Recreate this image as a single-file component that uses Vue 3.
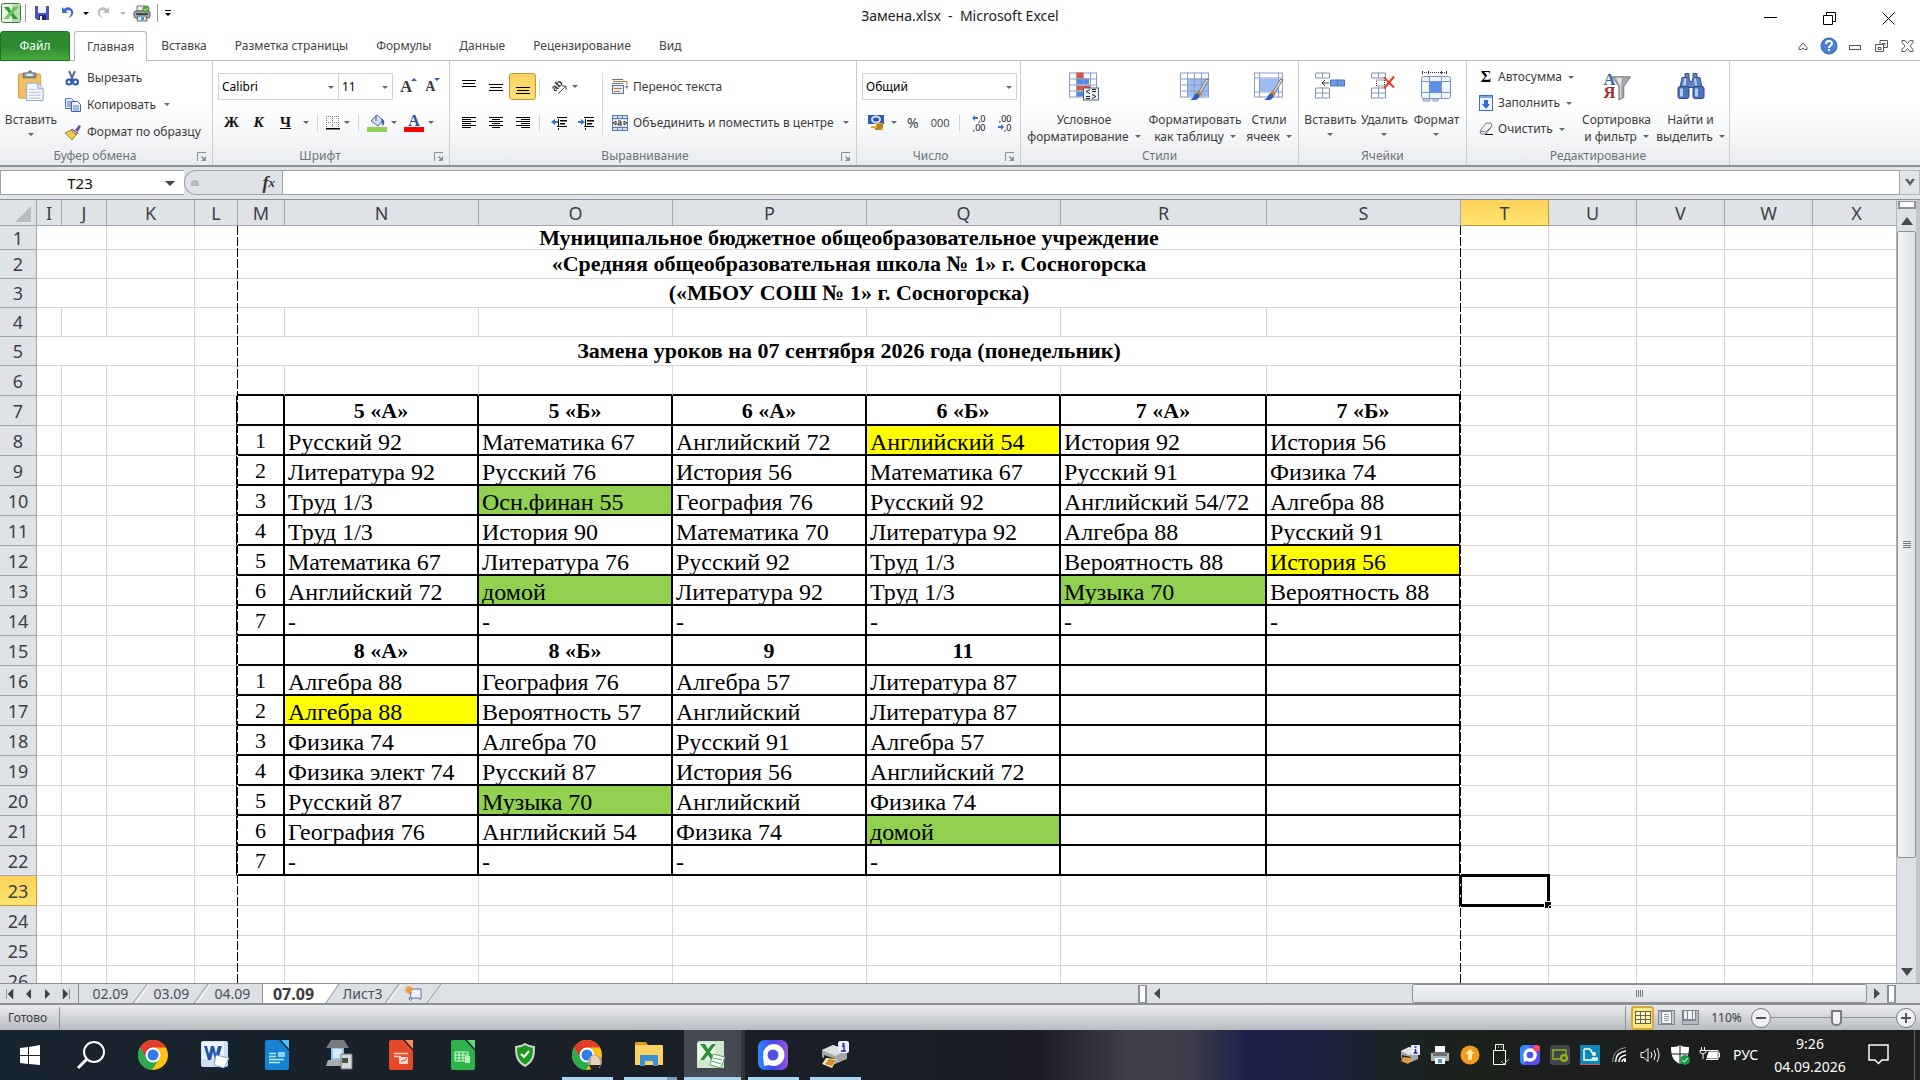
<script setup>
import { ref } from 'vue'

const tabs = ['Главная', 'Вставка', 'Разметка страницы', 'Формулы', 'Данные', 'Рецензирование', 'Вид']

const columns = [
  { name: 'I', w: 25 }, { name: 'J', w: 45 }, { name: 'K', w: 88 }, { name: 'L', w: 43 },
  { name: 'M', w: 47 }, { name: 'N', w: 194 }, { name: 'O', w: 194 }, { name: 'P', w: 194 },
  { name: 'Q', w: 194 }, { name: 'R', w: 206 }, { name: 'S', w: 194 }, { name: 'T', w: 88 },
  { name: 'U', w: 88 }, { name: 'V', w: 88 }, { name: 'W', w: 88 }, { name: 'X', w: 0 },
]

const titles = {
  1: 'Муниципальное бюджетное общеобразовательное учреждение',
  2: '«Средняя общеобразовательная школа № 1» г. Сосногорска',
  3: '(«МБОУ СОШ № 1» г. Сосногорска)',
  5: 'Замена уроков на 07 сентября 2026 года (понедельник)',
}

// A trailing "!" marks a yellow cell, a trailing "+" a green one.
const lessons = [
  ['', '5 «А»', '5 «Б»', '6 «А»', '6 «Б»', '7 «А»', '7 «Б»'],
  ['1', 'Русский 92', 'Математика 67', 'Английский 72', 'Английский 54!', 'История 92', 'История 56'],
  ['2', 'Литература 92', 'Русский 76', 'История 56', 'Математика 67', 'Русский 91', 'Физика 74'],
  ['3', 'Труд 1/3', 'Осн.финан 55+', 'География 76', 'Русский 92', 'Английский 54/72', 'Алгебра 88'],
  ['4', 'Труд 1/3', 'История 90', 'Математика 70', 'Литература 92', 'Алгебра 88', 'Русский 91'],
  ['5', 'Математика 67', 'Литература 76', 'Русский 92', 'Труд 1/3', 'Вероятность 88', 'История 56!'],
  ['6', 'Английский 72', 'домой+', 'Литература 92', 'Труд 1/3', 'Музыка 70+', 'Вероятность 88'],
  ['7', '-', '-', '-', '-', '-', '-'],
  ['', '8 «А»', '8 «Б»', '9', '11', '', ''],
  ['1', 'Алгебра 88', 'География 76', 'Алгебра 57', 'Литература 87', '', ''],
  ['2', 'Алгебра 88!', 'Вероятность 57', 'Английский', 'Литература 87', '', ''],
  ['3', 'Физика 74', 'Алгебра 70', 'Русский 91', 'Алгебра 57', '', ''],
  ['4', 'Физика элект 74', 'Русский 87', 'История 56', 'Английский 72', '', ''],
  ['5', 'Русский 87', 'Музыка 70+', 'Английский', 'Физика 74', '', ''],
  ['6', 'География 76', 'Английский 54', 'Физика 74', 'домой+', '', ''],
  ['7', '-', '-', '-', '-', '', ''],
]

const plain = (n, extra = '') => Array.from({ length: n }, () => ({ t: '', span: 1, c: extra }))

function buildRow(n) {
  let cells = []
  if (titles[n]) {
    cells = n === 5
      ? [{ t: '', span: 3, c: '' }, ...plain(1)]
      : [{ t: '', span: 2, c: '' }, ...plain(2)]
    cells.push({ t: titles[n], span: 7, c: n === 1 ? 'title first' : 'title' })
  } else if (n >= 7 && n <= 22) {
    cells = [...plain(3), ...plain(1, 'edge')]
    lessons[n - 7].forEach((raw, i) => {
      const mark = raw.endsWith('!') ? ' yellow' : raw.endsWith('+') ? ' green' : ''
      const kind = i === 0 ? 'num' : n === 7 || n === 15 ? 'head' : 'lesson'
      cells.push({ t: raw.replace(/[!+]$/, ''), span: 1, c: `box ${kind}${mark}` })
    })
  } else {
    cells = [...plain(4), ...plain(7, n === 6 ? 'top' : '')]
  }
  const tail = plain(5)
  if (n === 23) tail[0].c = 'active'
  return { n, h: n === 1 ? 24 : n < 6 ? 29 : 30, cells: [...cells, ...tail] }
}
const rows = Array.from({ length: 26 }, (_, i) => buildRow(i + 1))

const fontName = ref('Calibri')
const fontSize = ref('11')
const numFormat = ref('Общий')
const cellName = ref('T23')
const formula = ref('')
const zoom = ref(110)
</script>

<template>
  <div class="screen">
    <header class="titlebar">
      <div class="quick">
        <svg width="20" height="20" viewBox="0 0 20 20"><rect x=".5" y=".5" width="19" height="19" rx="2" fill="#e4f2df" stroke="#2f7d3b" /><path d="M11 1h8v18h-8z" fill="#b9dcae" /><path d="M3 4h5l2 4 3-4h4l-5 6 5 6h-5l-2-4-3 4H3l5-6z" fill="#2f9a3c" /><path d="M3 16 15 3h2L7 16z" fill="#7ccb5c" /></svg>
        <i class="qsep"></i>
        <button aria-label="Сохранить"><svg width="14" height="14" viewBox="0 0 14 14"><path d="M0 0h14v14H2L0 12z" fill="#4b55b5" /><path d="M3 0h8v7H3z" fill="#eef2ff" /><path d="M4 9h7v5H4z" fill="#20296e" /><path d="M5 10h2v4H5z" fill="#fff" /></svg></button>
        <button aria-label="Отменить" class="undo"><svg width="14" height="14" viewBox="0 0 14 14"><path d="M2 1v6h6L6 5c3-2 6 0 5 3-.5 2-2 3-3 4 4-1 6-4 5-7C12 1 7 0 4 3z" fill="#3d71c9" /></svg></button>
        <i class="tri dark"></i>
        <button aria-label="Вернуть" class="redo"><svg width="14" height="14" viewBox="0 0 14 14"><path d="M12 1v6H6l2-2C5 3 2 5 3 8c.5 2 2 3 3 4C2 11 0 8 1 5 2 1 7 0 10 3z" fill="#b9bcc1" /></svg></button>
        <i class="tri pale"></i>
        <button aria-label="Быстрая печать" class="print"><svg width="18" height="17" viewBox="0 0 18 17"><path d="M4 1h8v5H4z" fill="#eee" stroke="#777" /><rect x="1" y="6" width="16" height="7" rx="2" fill="#a9adb2" stroke="#555" /><path d="M3 8h12v2H3z" fill="#444" /><path d="M5 11h8l1 5H4z" fill="#d6eaf4" stroke="#666" /><path d="M8 12h3v3H8z" fill="#3d9bd0" /><circle cx="13" cy="4" r="3.500" fill="#49a62c" /><path d="m11 4 1.500 1.500L15 3" fill="none" stroke="#fff" /></svg></button>
        <i class="qsep"></i>
        <button aria-label="Настройка панели" class="more"><svg width="8" height="7" viewBox="0 0 8 7"><path d="M1 0h6v1H1zM1 3h6L4 6z" /></svg></button>
      </div>
      <h1>Замена.xlsx&nbsp; -&nbsp; Microsoft Excel</h1>
      <div class="winbtns">
        <button aria-label="Свернуть"><svg width="13" height="13"><path d="M0 5.500h13" stroke="#000" /></svg></button>
        <button aria-label="Восстановить"><svg width="13" height="13" fill="none" stroke="#000"><path d="M.5 3.500h9v9h-9zM3.500 3V.5h9v9H10" /></svg></button>
        <button aria-label="Закрыть"><svg width="13" height="13" stroke="#000"><path d="m.5.5 12 12m0-12-12 12" /></svg></button>
      </div>
    </header>

    <nav class="tabs">
      <button class="file">Файл</button>
      <button v-for="(t, i) in tabs" :key="t" class="tab" :class="{ on: i === 0 }">{{ t }}</button>
      <div class="mdi">
        <button aria-label="Свернуть ленту"><svg width="10" height="10" fill="none" stroke="#555"><path d="M1 6.500 5 2l4 4.500v2H6.500L5 7 3.500 8.500H1z" /></svg></button>
        <button aria-label="Справка"><svg width="18" height="18" viewBox="0 0 18 18"><circle cx="9" cy="9" r="8" fill="#4a7fd3" stroke="#3564ad" /><path d="M6 7c0-4 6-4 6-.5 0 2-3 2-3 4.500" fill="none" stroke="#fff" stroke-width="2" /><path d="M8 12h2v2H8z" fill="#fff" /></svg></button>
        <button aria-label="Свернуть книгу"><svg width="12" height="12" fill="none" stroke="#555"><rect x=".5" y="5.500" width="11" height="4" /></svg></button>
        <button aria-label="Восстановить книгу"><svg width="13" height="12" fill="none" stroke="#555"><path d="M5 4V.5h7.500v7H9M.5 4.500h8v7h-8zM3 7.500h3v2H3zM7 3.500h3v2" /></svg></button>
        <button aria-label="Закрыть книгу"><svg width="13" height="12" fill="none" stroke="#555"><path d="M1 .5h3l2.500 3 2.500-3h3v2L9 6l3 3.500v2H9l-2.500-3-2.500 3H1v-2L4 6 1 2.500z" /></svg></button>
      </div>
    </nav>

    <section class="ribbon">
      <div class="group g-clip">
        <div class="body">
          <button class="big">
            <svg width="28" height="32" viewBox="0 0 28 32"><rect x="1" y="3" width="23" height="25" rx="2" fill="#f0bf66" stroke="#d79c3e" /><path d="M6 2h5c0-3 4-3 4 0h4v5H6z" fill="#8d949c" stroke="#6b7077" /><path d="M9 3h7v2H9z" fill="#f3f3f3" /><path d="M9.500 12.500H21l5.500 6v12h-17z" fill="#f6faff" stroke="#8ba3c6" /><path d="M21 12.500v6h5.500" fill="#d7e4f5" stroke="#8ba3c6" /><path d="M12 19h7m-7 3h12m-12 3h12m-12 3h12" stroke="#a9bcd6" /></svg>
            <span>Вставить</span><i class="tri"></i>
          </button>
          <div class="list">
            <button><svg width="16" height="16" viewBox="0 0 16 16"><path d="m4 1 4 9M10 1 6 10" stroke="#566c91" stroke-width="2" /><circle cx="4" cy="12" r="2.500" fill="none" stroke="#2455b8" stroke-width="2" /><circle cx="10.500" cy="12" r="2.500" fill="none" stroke="#2455b8" stroke-width="2" /></svg>Вырезать</button>
            <button><svg width="16" height="16" viewBox="0 0 16 16"><path d="M.5 1.500h6l2 2v8h-8z" fill="#dce8fb" stroke="#5276b8" /><path d="M2 5h4M2 7h4M2 9h4" stroke="#5276b8" /><path d="M6.500 4.500h6l3 3v7h-9z" fill="#e9f1ff" stroke="#3d64ae" /><path d="M8 9h6m-6 2h6m-6 2h6" stroke="#5b82c8" /></svg>Копировать<i class="tri"></i></button>
            <button><svg width="16" height="16" viewBox="0 0 16 16"><path d="m10 6 4-5 2 1-3 6z" fill="#5b5b8e" /><path d="M7 5 13 9l-2 2-6-4z" fill="#a7adb8" stroke="#666" /><path d="m0 9 6-3 5 5-4 5z" fill="#efc94c" stroke="#a6812a" /></svg>Формат по образцу</button>
          </div>
        </div>
        <footer>Буфер обмена<svg class="launch" width="10" height="10"><path d="M.5 9V.5H9" fill="none" stroke="#8a8f96" /><path d="M9 4v5H4l2-2-2-2 1-1 2 2z" fill="#8a8f96" /></svg></footer>
      </div>

      <div class="group g-font">
        <div class="body stack">
          <div class="line">
            <label class="pick name"><select v-model="fontName" aria-label="Шрифт"><option>Calibri</option></select></label>
            <label class="pick size"><select v-model="fontSize" aria-label="Размер шрифта"><option>11</option></select></label>
            <button class="grow" aria-label="Увеличить размер">A<i></i></button>
            <button class="grow less" aria-label="Уменьшить размер">A<i></i></button>
          </div>
          <div class="line marks">
            <button class="bold">Ж</button><button class="bold ital">К</button><button class="bold under">Ч</button><i class="tri"></i>
            <i class="vsep"></i>
            <button aria-label="Границы"><svg width="14" height="14"><path d="M.5 0v13M6.500 0v13M12.500 0v13M0 .5h13M0 6.500h13" stroke="#777" stroke-dasharray="1 1" /><path d="M0 12h14v1.500H0z" /></svg></button><i class="tri"></i>
            <i class="vsep"></i>
            <button aria-label="Цвет заливки"><svg width="20" height="18" viewBox="0 0 20 18"><path d="m4 7 6-6 6 5-5 6z" fill="#cfe0f5" stroke="#566c91" /><path d="M9 1v6" stroke="#555" /><path d="M14 5c4 0 4 4 2 7-2-3-1-4-2-7z" fill="#3b66b5" /><path d="M0 13h20v5H0z" fill="#92d050" /></svg></button><i class="tri"></i>
            <button class="ink" aria-label="Цвет текста"><b>A</b><u></u></button><i class="tri"></i>
          </div>
        </div>
        <footer>Шрифт<svg class="launch" width="10" height="10"><path d="M.5 9V.5H9" fill="none" stroke="#8a8f96" /><path d="M9 4v5H4l2-2-2-2 1-1 2 2z" fill="#8a8f96" /></svg></footer>
      </div>

      <div class="group g-align">
        <div class="body">
          <div class="stack aligns">
            <div class="line">
              <button aria-label="По верхнему краю"><svg width="14" height="14"><path d="M0 .5h14M1 3.500h12M0 6.500h14" stroke="#000" /></svg></button>
              <button aria-label="По середине"><svg width="14" height="14"><path d="M0 4.500h14M1 7.500h12M0 10.500h14" stroke="#000" /></svg></button>
              <button class="pressed" aria-label="По нижнему краю"><svg width="14" height="14"><path d="M0 7.500h14M1 10.500h12M0 13.500h14" stroke="#000" /></svg></button>
              <i class="vsep"></i>
              <button aria-label="Ориентация"><svg width="18" height="16" viewBox="0 0 18 16"><text x="0" y="0" font-size="10" font-family="Liberation Sans" font-weight="bold" transform="translate(5 13) rotate(-45)" fill="#333">ab</text><path d="m8 15 8-8m0 0v4m0-4h-4" fill="none" stroke="#555" /></svg></button><i class="tri"></i>
            </div>
            <div class="line">
              <button aria-label="По левому краю"><svg width="14" height="12"><path d="M0 .5h14M0 2.500h9M0 4.500h14M0 6.500h9M0 8.500h14M0 10.500h9" stroke="#000" /></svg></button>
              <button aria-label="По центру"><svg width="14" height="12"><path d="M0 .5h14M3 2.500h8M0 4.500h14M3 6.500h8M0 8.500h14M3 10.500h8" stroke="#000" /></svg></button>
              <button aria-label="По правому краю"><svg width="14" height="12"><path d="M0 .5h14M5 2.500h9M0 4.500h14M5 6.500h9M0 8.500h14M5 10.500h9" stroke="#000" /></svg></button>
              <i class="vsep"></i>
              <button aria-label="Уменьшить отступ"><svg width="16" height="14"><path d="M6 1.500h10M9 4.500h7M9 7.500h5M6 10.500h10M7.500 12v2M7.500 3v7" stroke="#000" /><path d="M9 5h7M9 8h5" stroke="#000" /><path d="M0 6 4 3v2h3v2H4v2z" fill="#3d6fc9" /></svg></button>
              <button aria-label="Увеличить отступ"><svg width="16" height="14"><path d="M6 1.500h10M9 4.500h7M9 7.500h5M6 10.500h10M7.500 12v2M7.500 3v7" stroke="#000" /><path d="M9 5h7M9 8h5" stroke="#000" /><path d="M7 6 3 3v2H0v2h3v2z" fill="#3d6fc9" /></svg></button>
            </div>
          </div>
          <i class="tall"></i>
          <div class="stack wraps">
            <div class="line"><button><svg width="16" height="16" viewBox="0 0 16 16"><path d="M0 .5h11M0 4.500h11" stroke="#60738f" /><path d="M1 2.500h14v4" fill="none" stroke="#b7763a" /><path d="m13 7 2 3 1-3z" fill="#3d6fc9" /><rect x=".5" y="6.500" width="11" height="8" fill="#e4edf9" stroke="#60738f" /><path d="M2 9.500h8M2 12.500h6" stroke="#b7763a" /></svg>Перенос текста</button></div>
            <div class="line"><button><svg width="16" height="16" viewBox="0 0 16 16"><rect x=".5" y=".5" width="15" height="15" fill="#cfdff4" stroke="#5c7cab" /><path d="M0 3.500h16M0 12.500h16M5.500 0v3m5-3v3m-5 10v3m5-3v3" stroke="#5c7cab" /><path d="M1 5h14v6H1z" fill="#fff" /><path d="m1 8 3-2v4zM15 8l-3-2v4zM6 6h3v4H6V8h3m0 2h1" fill="none" stroke="#222" /></svg>Объединить и поместить в центре<i class="tri"></i></button></div>
          </div>
        </div>
        <footer class="wide-foot">Выравнивание<svg class="launch" width="10" height="10"><path d="M.5 9V.5H9" fill="none" stroke="#8a8f96" /><path d="M9 4v5H4l2-2-2-2 1-1 2 2z" fill="#8a8f96" /></svg></footer>
      </div>

      <div class="group g-num">
        <div class="body stack">
          <div class="line"><label class="pick fmt"><select v-model="numFormat" aria-label="Числовой формат"><option>Общий</option></select></label></div>
          <div class="line nums">
            <button aria-label="Финансовый формат"><svg width="16" height="16" viewBox="0 0 16 16"><rect y="0" width="16" height="9" fill="#2e5bb1" /><ellipse cx="8" cy="4.500" rx="4" ry="3" fill="none" stroke="#cfe0ff" stroke-width="2" /><path d="M8 8h7v7H7v-2H3v-2h5z" fill="#e5a92c" /><path d="M9 10h6m-6 2h6m-8 2h6" stroke="#8a5c10" /></svg></button><i class="tri"></i>
            <button class="pct">%</button><button class="zeros">000</button><i class="vsep"></i>
            <button class="dec" aria-label="Увеличить разрядность"><span><svg width="6" height="6"><path d="M0 3 3 0v2h3v2H3v2z" fill="#3d6fc9" /></svg>,0</span><span>,00</span></button>
            <button class="dec" aria-label="Уменьшить разрядность"><span>,00</span><span><svg width="6" height="6"><path d="M6 3 3 0v2H0v2h3v2z" fill="#3d6fc9" /></svg>,0</span></button>
          </div>
        </div>
        <footer class="wide-foot">Число<svg class="launch" width="10" height="10"><path d="M.5 9V.5H9" fill="none" stroke="#8a8f96" /><path d="M9 4v5H4l2-2-2-2 1-1 2 2z" fill="#8a8f96" /></svg></footer>
      </div>

      <div class="group g-style">
        <div class="body">
          <button class="big wide">
            <svg width="30" height="30" viewBox="0 0 30 30"><rect x=".5" y="1.500" width="27" height="24" fill="#fff" stroke="#8a9dc4" /><path d="M7 1h7v6H7zM7 14h14v5H7z" fill="#e0513a" /><path d="M7 7h13v6H7zM7 20h7v5H7z" fill="#5585e0" /><path d="M.5 7.500h27m-27 6h27m-27 6h27M7.500 1v25M14.500 1v25M21.500 1v25" stroke="#8a9dc4" /><rect x="14.500" y="16.500" width="15" height="12" fill="#eef5fb" stroke="#4c5e7e" /><path d="m21 18-4 2 4 2m-4 3h4m-4 2h4m2-7h4m-4-2h4m-4 5 4 2-4 2" fill="none" stroke="#222" /></svg>
            <span>Условное</span><span>форматирование<i class="tri"></i></span>
          </button>
          <button class="big fmtas">
            <svg width="30" height="30" viewBox="0 0 30 30"><rect x=".5" y="1.500" width="28" height="24" fill="#fff" stroke="#8a9dc4" /><path d="M7 7h21v18H7z" fill="#9dbcf2" /><path d="M.5 7.500h28m-28 6h28m-28 6h28M7.500 1v25M14.500 1v25M21.500 1v25" stroke="#8a9dc4" /><path d="m29 8-8 13-2-1 7-12z" fill="#ddd" stroke="#777" /><path d="m18 19 4 3-3 4-4-2z" fill="#c98035" /><path d="M16 22c3 0 4 2 3 4-2 3-6 3-9 2 4-1 3-4 6-6z" fill="#2e62b8" /></svg>
            <span>Форматировать</span><span>как таблицу<i class="tri"></i></span>
          </button>
          <button class="big cellst">
            <svg width="30" height="30" viewBox="0 0 30 30"><rect x=".5" y="1.500" width="28" height="24" fill="#fff" stroke="#8a9dc4" /><path d="M5.500 1v25M24.500 1v25M0 6.500h29M0 20.500h29" stroke="#8a9dc4" /><path d="M6 7h18v13H6z" fill="#9dbcf2" /><path d="m29 8-8 13-2-1 7-12z" fill="#ddd" stroke="#777" /><path d="m18 19 4 3-3 4-4-2z" fill="#c98035" /><path d="M16 22c3 0 4 2 3 4-2 3-6 3-9 2 4-1 3-4 6-6z" fill="#2e62b8" /></svg>
            <span>Стили</span><span>ячеек<i class="tri"></i></span>
          </button>
        </div>
        <footer>Стили</footer>
      </div>

      <div class="group g-cells">
        <div class="body">
          <button class="big c1">
            <svg width="30" height="30" viewBox="0 0 30 30"><path d="M.5 1.500h14v5H.5zM7.500 1v5M.5 16.500h14v10H.5zM7.500 16v10M.5 21.500h14" fill="#fff" stroke="#8093b8" /><path d="M15.500 8.500h14v6h-14zM22.500 8v6" fill="#6d9ae6" stroke="#4c70b8" /><path d="M14 11.500H7m3-3-3 3 3 3" fill="none" stroke="#333" /></svg>
            <span>Вставить</span><i class="tri"></i>
          </button>
          <button class="big c2">
            <svg width="26" height="30" viewBox="0 0 26 30"><path d="M.5 1.500h14v5H.5zM7.500 1v5M.5 16.500h14v10H.5zM7.500 16v10M.5 21.500h14" fill="#fff" stroke="#8093b8" /><path d="M5.500 8.500h8v6h-8z" fill="none" stroke="#333" stroke-dasharray="1 1" /><path d="m13 6 10 10m0-11L13 17" stroke="#e23a22" stroke-width="2" /></svg>
            <span>Удалить</span><i class="tri"></i>
          </button>
          <button class="big c3">
            <svg width="30" height="31" viewBox="0 0 30 31"><path d="M1 1.500h26" stroke="#333" stroke-dasharray="1 1" /><path d="M1.500 0v3M7.500 0v3m13-3v3m5-3v3" stroke="#333" /><rect x=".5" y="5.500" width="29" height="22" rx="2" fill="#eef4fd" stroke="#8093b8" /><path d="M8.500 5v22M20.500 5v22M0 10.500h29M0 21.500h29" stroke="#8093b8" /><path d="M9 11h11v11H9z" fill="#5f8fe4" /><path d="M2 28h7v2H2zm10 0h5v2h-5z" fill="#fff" stroke="#8093b8" /></svg>
            <span>Формат</span><i class="tri"></i>
          </button>
        </div>
        <footer>Ячейки</footer>
      </div>

      <div class="group g-edit">
        <div class="body">
          <div class="list edit">
            <button><b class="sigma">Σ</b>Автосумма<i class="tri"></i></button>
            <button><svg width="14" height="16" viewBox="0 0 14 16"><rect x=".5" y=".5" width="13" height="15" fill="#eef5ff" stroke="#3b6bbd" /><path d="M1 1h12v2H1z" fill="#7fa6e4" /><path d="M5 5h4v4h2l-4 5-4-5h2z" fill="#2f6be0" /></svg>Заполнить<i class="tri"></i></button>
            <button><svg width="14" height="14" viewBox="0 0 14 14"><path d="m1 9 6-8h5l1 3-6 8H2z" fill="#f2f3f7" stroke="#777a8c" /><path d="m1 9 6 1 6-6" fill="none" stroke="#777a8c" /><path d="M6 12.500h8" stroke="#000" /></svg>Очистить<i class="tri"></i></button>
          </div>
          <button class="big sort">
            <svg width="30" height="32" viewBox="0 0 30 32"><text x="1" y="14" font-family="Liberation Serif" font-weight="bold" font-size="17" fill="#3561ad">A</text><text x="1" y="28" font-family="Liberation Serif" font-weight="bold" font-size="17" fill="#a12f2f">Я</text><path d="M10 6h19l-7 10v11l-5 3V16z" fill="#a5a8ad" stroke="#75787c" /><path d="M14 7h6l-1 8v13l-1 0V15z" fill="#e4e6e8" /></svg>
            <span>Сортировка</span><span>и фильтр<i class="tri"></i></span>
          </button>
          <button class="big find">
            <svg width="28" height="30" viewBox="0 0 28 30"><path d="M8 2h4v4H8zM16 2h4v4h-4zM5 6h7l1 4h2l1-4h7l2 10H3z" fill="#5f82c0" stroke="#35538c" /><rect x="1" y="15" width="11" height="12" rx="2" fill="#4a73bd" stroke="#2e4a82" /><rect x="16" y="15" width="11" height="12" rx="2" fill="#4a73bd" stroke="#2e4a82" /><path d="M3 17h3v8H3zm15 0h3v8h-3zM7 7h2v7H6zm10 0h2l1 7h-2z" fill="#b9cdf0" /></svg>
            <span>Найти и</span><span>выделить<i class="tri"></i></span>
          </button>
        </div>
        <footer>Редактирование</footer>
      </div>
    </section>

    <section class="fbar">
      <label class="cellname"><input v-model="cellName" aria-label="Имя ячейки" /></label>
      <div class="fx"><i></i><button><em>f</em><sub>x</sub></button></div>
      <input v-model="formula" class="formula" aria-label="Строка формул" />
      <button class="expand" aria-label="Развернуть"><svg width="12" height="9"><path d="M1 1h3l2 3 2-3h3L6 8z" fill="#555a60" /></svg></button>
    </section>

    <main class="sheet">
      <div class="gridwrap">
        <table class="grid">
          <colgroup><col class="rowcol" /><col v-for="c in columns" :key="c.name" :style="c.w ? { width: c.w + 'px' } : null" /></colgroup>
          <thead><tr><th class="corner"><i></i></th><th v-for="c in columns" :key="c.name" :class="{ hot: c.name === 'T' }">{{ c.name }}</th></tr></thead>
          <tbody>
            <tr v-for="r in rows" :key="r.n" :style="{ height: r.h + 'px' }">
              <th :class="{ hot: r.n === 23 }"><div>{{ r.n }}</div></th>
              <td v-for="(c, i) in r.cells" :key="i" :colspan="c.span" :class="c.c"><div v-if="c.t">{{ c.t }}</div><i v-if="c.c === 'active'" class="cursor"></i></td>
            </tr>
          </tbody>
        </table>
        <i class="pagebreak left"></i><i class="pagebreak right"></i>
      </div>
      <div class="vscroll">
        <i class="split"></i>
        <svg class="arr" width="12" height="8"><path d="M0 8h12L6 0z" fill="#444a50" /></svg>
        <div class="vtrack"><div class="vthumb"><i></i><i></i><i></i><i></i></div></div>
        <svg class="arr" width="12" height="8"><path d="M0 0h12L6 8z" fill="#444a50" /></svg>
      </div>
    </main>

    <div class="sheetbar">
      <div class="snav">
        <button aria-label="Первый лист"><svg width="9" height="10"><path d="M1.500 0v10M8 0v10L3 5z" fill="#3b4046" stroke="#3b4046" stroke-width=".5" /></svg></button>
        <button aria-label="Предыдущий лист"><svg width="9" height="10"><path d="M7 0v10L2 5z" fill="#3b4046" /></svg></button>
        <button aria-label="Следующий лист"><svg width="9" height="10"><path d="M2 0v10l5-5z" fill="#3b4046" /></svg></button>
        <button aria-label="Последний лист"><svg width="9" height="10"><path d="M7.500 0v10M1 0v10l5-5z" fill="#3b4046" stroke="#3b4046" stroke-width=".5" /></svg></button>
      </div>
      <div class="stabs">
        <button>02.09</button><svg width="16" height="20"><path d="M0 19 14 0" stroke="#8f959c" /><path d="M3 19 16 1" stroke="#fff" /></svg>
        <button>03.09</button><svg width="16" height="20"><path d="M0 19 14 0" stroke="#8f959c" /><path d="M3 19 16 1" stroke="#fff" /></svg>
        <button>04.09</button>
        <button class="cur">07.09</button><svg width="16" height="20"><path d="M0 0h14L1 20H0z" fill="#fff" /><path d="M1 20 15 0" stroke="#8f959c" /></svg>
        <button>Лист3</button><svg width="16" height="20"><path d="M0 19 14 0" stroke="#8f959c" /><path d="M3 19 16 1" stroke="#fff" /></svg>
        <button aria-label="Вставить лист" class="newsheet"><svg width="18" height="16" viewBox="0 0 18 16"><path d="M5 3h11v9c0 2-2 2-2 0H7c0 3-3 3-3 0h2z" fill="#eef3fb" stroke="#5874a6" /><path d="M4 0v8M0 4h8M1 1l6 6m0-6L1 7" stroke="#e99a2c" stroke-width="1.500" /></svg></button><svg width="16" height="20"><path d="M0 19 14 0" stroke="#8f959c" /></svg>
      </div>
      <div class="hscroll">
        <i class="hsplit"></i>
        <svg width="6" height="11"><path d="M6 0v11L0 5.500z" fill="#444a50" /></svg>
        <div class="htrack"><div class="hthumb"><i></i><i></i><i></i><i></i></div></div>
        <svg width="6" height="11"><path d="M0 0v11l6-5.500z" fill="#444a50" /></svg>
        <i class="hsplit"></i>
      </div>
    </div>

    <div class="status">
      <span class="ready">Готово</span>
      <div class="views">
        <button class="sel" aria-label="Обычный"><svg width="16" height="13"><rect width="16" height="13" fill="#6a6146" /><path d="M1 1h4v3H1zm5 0h4v3H6zm5 0h4v3h-4zM1 5h4v3H1zm5 0h4v3H6zm5 0h4v3h-4zM1 9h4v3H1zm5 0h4v3H6zm5 0h4v3h-4z" fill="#fff6c8" /></svg></button>
        <button aria-label="Разметка страницы"><svg width="17" height="15"><rect width="17" height="15" fill="#7f858c" /><path d="M1 1h2v13H1zm13 0h2v13h-2z" fill="#c4c9ce" /><path d="M4 2h9v11H4z" fill="#f4f6f8" /><path d="M6 4.500h5m-5 2h5m-5 2h5m-5 2h5" stroke="#9aa0a6" /></svg></button>
        <button aria-label="Страничный"><svg width="17" height="15"><rect width="17" height="15" fill="#7f858c" /><path d="M2 1h3v8H2zm4 0h4v8H6zm5 0h2v8h-2z" fill="#eef0f3" /><path d="M14 1h2v13H1v-3h13z" fill="#b4b9bf" /></svg></button>
      </div>
      <span class="pc">110%</span>
      <div class="zoomer">
        <button aria-label="Уменьшить"><svg width="20" height="20"><path d="M5 10h10" stroke="#555" stroke-width="2" /></svg></button>
        <input v-model="zoom" type="range" min="10" max="200" aria-label="Масштаб" />
        <button aria-label="Увеличить"><svg width="20" height="20"><path d="M5 10h10M10 5v10" stroke="#555" stroke-width="2" /></svg></button>
      </div>
    </div>

    <div class="taskbar">
      <div class="apps">
        <button aria-label="Пуск"><svg width="20" height="20"><path d="m0 3 8-1v8H0zm9-1 11-2v10H9zM0 11h8v8l-8-1zm9 0h11v9L9 19z" fill="#fff" /></svg></button>
        <button aria-label="Поиск"><svg width="30" height="30" fill="none" stroke="#fff"><circle cx="18" cy="12" r="10" stroke-width="2" /><path d="M11 19 2 28" stroke-width="3" /></svg></button>
        <button aria-label="Chrome"><svg width="30" height="30" viewBox="0 0 30 30"><circle cx="15" cy="15" r="15" fill="#fbc116" /><path d="M2 7.500A15 15 0 0 1 28 7.500H15L8.500 19z" fill="#e33b2e" /><path d="M2 7.500A15 15 0 0 0 14 30l7.500-12-12 1z" fill="#2da94f" /><circle cx="15" cy="15" r="7.500" fill="#fff" /><circle cx="15" cy="15" r="5.500" fill="#2f7de9" /></svg></button>
        <button aria-label="Word"><svg width="28" height="28" viewBox="0 0 28 28"><rect width="27" height="26" rx="2" fill="#cfe0f6" /><path d="M1 1h22v17H1z" fill="#e9f2fd" /><path d="m3 5 4 14h3l2-8 2 8h3l4-14h-4l-2 8-2-8h-3L8 13 6 5z" fill="#2456a8" /><path d="m15 14 13 3-5 10-10-3z" fill="#fff" stroke="#7ba3d6" /></svg></button>
        <button aria-label="Writer"><svg width="24" height="30" viewBox="0 0 24 30"><path d="M2 0h12l10 11v17q0 2-2 2H2q-2 0-2-2V2q0-2 2-2z" fill="#1583d3" /><path d="M16 0h8v9z" fill="#4cc3f4" /><path d="M4 13.500h7M4 16.500h7M4 19.500h15M4 22.500h11" stroke="#bfe6ff" stroke-width="1.500" /><path d="M13 12h7v5h-7z" fill="#8fd2f7" /></svg></button>
        <button aria-label="Сканер"><svg width="30" height="30" viewBox="0 0 30 30"><path d="M7 0h13l5 8H2z" fill="#77797d" /><path d="M7 8h13v12H7z" fill="#8fc4ea" /><path d="M9 9h9v9H9z" fill="#d7edfb" /><path d="M4 20h20l2 6H2z" fill="#a9acb0" /><path d="M17 14h11v15H17z" fill="#d5d7da" stroke="#777" /><path d="M18 18h6v5h-6z" fill="#48553a" /></svg></button>
        <button aria-label="Impress"><svg width="24" height="30" viewBox="0 0 24 30"><path d="M2 0h12l10 11v17q0 2-2 2H2q-2 0-2-2V2q0-2 2-2z" fill="#e5492a" /><path d="M16 0h8v9z" fill="#f58a5d" /><path d="M5 13.500h14M5 16.500h7" stroke="#ffd9c9" stroke-width="1.500" /><path d="M10 17h9v7h-9z" fill="#ffd9c9" /><path d="m12 22 2-2 1 1 3-3" stroke="#e5492a" fill="none" /></svg></button>
        <button aria-label="Calc"><svg width="24" height="30" viewBox="0 0 24 30"><path d="M2 0h12l10 11v17q0 2-2 2H2q-2 0-2-2V2q0-2 2-2z" fill="#2fb24a" /><path d="M16 0h8v9z" fill="#5edb72" /><path d="M4 12h13v9H4zm0 3h13M4 18h13M8 12v9m4-9v9" fill="none" stroke="#d3ffd9" /><path d="M14 16h5v7h-5z" fill="#b5f0bd" /></svg></button>
        <button aria-label="Защита"><svg width="22" height="24" viewBox="0 0 22 24"><path d="M11 1c3 2 6 3 9 3 0 9-1 14-9 19C3 18 2 13 2 4c3 0 6-1 9-3z" fill="#1a9a1d" stroke="#cfd6cf" stroke-width="2" /><path d="m7 11 3 3 5-6" fill="none" stroke="#fff" stroke-width="2" /></svg></button>
        <button class="run" aria-label="Chrome, профиль"><svg width="30" height="30" viewBox="0 0 30 30"><circle cx="15" cy="15" r="15" fill="#fbc116" /><path d="M2 7.500A15 15 0 0 1 28 7.500H15L8.500 19z" fill="#e33b2e" /><path d="M2 7.500A15 15 0 0 0 14 30l7.500-12-12 1z" fill="#2da94f" /><circle cx="15" cy="15" r="7.500" fill="#fff" /><circle cx="15" cy="15" r="5.500" fill="#2f7de9" /><circle cx="23" cy="22" r="7" fill="#b8a593" /><path d="M19 16h6l3 5v7h-9z" fill="#e9d3b9" /><path d="M17 25h12l-3 4h-7z" fill="#26201e" /></svg></button>
        <button class="run two" aria-label="Проводник"><svg width="28" height="26" viewBox="0 0 28 26"><path d="M0 1q0-1 1-1h10l2 3H0z" fill="#d99a1f" /><path d="M0 3h27q1 0 1 1v19H0z" fill="#fbd264" /><path d="M5 13h18v11h-5v-5h-8v5H5z" fill="#3d8fd6" /></svg></button>
        <button class="run front" aria-label="Excel"><svg width="28" height="28" viewBox="0 0 28 28"><path d="M2 0h25v27H0V2z" fill="#cfe8cf" /><path d="M1 2h17v17H1z" fill="#eaf6e8" /><path d="M3 3h5l3 5 4-5h4l-6 8 6 8h-5l-3-5-4 5H3l6-8z" fill="#2f8f3b" /><path d="m16 13 12 3-4 11-11-3z" fill="#fff" stroke="#58a55f" /><path d="m16 17 9 2m-10 1 9 3" stroke="#58a55f" /></svg></button>
        <button class="run" aria-label="Мессенджер"><svg width="30" height="30" viewBox="0 0 30 30"><defs><linearGradient id="mx"><stop offset="0" stop-color="#2f8bff" /><stop offset=".5" stop-color="#3f45ee" /><stop offset="1" stop-color="#9a55d8" /></linearGradient></defs><rect width="30" height="30" rx="7" fill="url(#mx)" /><path d="M15 4a11 11 0 1 1-4 21l-5 1-1-11A10.500 10.500 0 0 1 15 4z" fill="#fff" /><circle cx="15" cy="15" r="5.500" fill="#4f50e8" /></svg></button>
        <button class="run" aria-label="Принтер"><svg width="30" height="28" viewBox="0 0 30 28"><path d="m2 9 11-5 14 5v9l-12 5L2 16z" fill="#a5a8ab" /><path d="m2 9 11-5 14 5-12 6z" fill="#dcdedf" /><path d="m4 14 12 4-1 4L4 18z" fill="#222" /><path d="m6 17 11 1-5 9-10-4z" fill="#efe7c0" /><path d="m9 18 7 1-4 6-7-2z" fill="#d98a2b" /><rect x="18" width="11" height="12" rx="2" fill="#e9efff" /><path d="M22 5h2v5m-3 0h5" stroke="#1c2b9c" stroke-width="1.500" fill="none" /><path d="M22.500 2h2v2h-2z" fill="#1c2b9c" /></svg></button>
      </div>
      <div class="tray">
        <svg width="20" height="20" viewBox="0 0 20 20"><path d="m1 6 8-4 9 3v9l-9 4-8-5z" fill="#a5a8ab" /><path d="m1 6 8-4 8 3-8 5z" fill="#e2e3e4" /><path d="m2 10 9 2-1 3-8-2z" fill="#222" /><path d="m3 12 9 1-4 6-7-3z" fill="#e39a3f" /><rect x="11" width="9" height="10" rx="1" fill="#e9efff" /><path d="M15.500 4v4m-2 0h4M14.500 2h2" stroke="#1c2b9c" stroke-width="1.500" /></svg>
        <svg width="20" height="20" viewBox="0 0 20 20"><path d="M5 1h10v7H5z" fill="#f4f4f4" /><path d="M1 8h18v8H1z" fill="#b3b6b9" /><path d="M3 7h14v4H3z" fill="#6b6e72" /><path d="M5 13h10v6H5z" fill="#fff" /><path d="M8 14h4v4H8z" fill="#4a9dd1" /></svg>
        <svg width="20" height="20"><circle cx="10" cy="10" r="9.500" fill="#f29a1c" /><path d="m10 4 5 5h-3v6H8V9H5z" fill="#ffe9a8" /></svg>
        <svg width="20" height="22" fill="none" stroke="#fff"><path d="M5.500 6V.5h8V6M3.500 6.500h12v14h-12zM8 3h1m2 0h1" /><path d="m11 17 3 3 5-5" stroke="#bbb" /></svg>
        <svg width="20" height="20" viewBox="0 0 30 30"><rect width="30" height="30" rx="7" fill="#5a4df0" /><path d="M0 8q0-8 8-8h7L6 30Q0 28 0 22z" fill="#2f8bff" /><path d="M15 5a10 10 0 1 1-4 19l-5 1-1-10A10 10 0 0 1 15 5z" fill="#fff" /><circle cx="15" cy="15" r="5" fill="#4f50e8" /><circle cx="25" cy="5" r="5" fill="#f0506a" /></svg>
        <svg width="20" height="20"><rect width="20" height="20" rx="3" fill="#41464a" /><path d="M3 5h13v9H3z" fill="none" stroke="#8fb21e" stroke-width="1.500" /><circle cx="14" cy="13" r="4" fill="#8fb21e" /><path d="M12 13h4m-2-2v4" stroke="#333" /></svg>
        <svg width="20" height="20"><rect width="20" height="20" fill="#0d87b8" /><path d="M0 19h20v1H0z" fill="#e05050" /><path d="M4 4h6M4 4v11h13v-3M10 4l3 5" fill="none" stroke="#fff" stroke-width="1.500" /><circle cx="14" cy="9" r="2" fill="#fff" /><path d="M11 14q3-4 6 0z" fill="#fff" /></svg>
        <svg width="20" height="20" fill="none" stroke="#fff"><path d="M2.500 17Q3 4 16 2.500" stroke="#999" /><path d="M5.500 17Q6 7 16 6M9 17q0-6 7-7M12 17q0-3 4-3" stroke-width="1.500" /><path d="M14 16h2" stroke-width="2" /></svg>
        <svg width="20" height="20" fill="none" stroke="#fff"><path d="M1 7.500h3l4-4v13l-4-4H1zM11 7q2 3 0 6m3-8q3 5 0 10m3-12q4 7 0 14" /></svg>
        <svg width="20" height="22"><path d="M10 1c3 2 6 2 9 2 0 9-2 14-9 17C3 17 1 12 1 3c3 0 6 0 9-2z" fill="#fff" /><path d="M10 1v19M1 10h18" stroke="#1e1e1e" /><circle cx="15" cy="16" r="5" fill="#1e9a4b" /><path d="m12.500 16 2 2 3-4" fill="none" stroke="#fff" /></svg>
        <svg width="20" height="20" fill="none" stroke="#fff"><path d="M6 5.500h12v9H6M18 8h1.500v4H18" /><path d="M9 7h8v6H7z" fill="#fff" /><path d="M1.500 2v3M4.500 2v3M0 5.500h6v2q-3 3-6 0zM3 9v5" /></svg>
        <span class="lang">РУС</span>
        <time><span>9:26</span><span>04.09.2026</span></time>
        <button aria-label="Уведомления"><svg width="22" height="22" fill="none" stroke="#fff" stroke-width="1.500"><path d="M1 1h19v15h-6l-3.500 3.500L7 16H1z" /></svg></button>
        <i class="peek"></i>
      </div>
    </div>
  </div>
</template>

<style>
body { margin: 0; overflow: hidden; }
</style>

<style scoped>
* { box-sizing: border-box; }
.screen { height: 100vh; display: flex; flex-direction: column; background: #fff; font: 12px/16px "Noto Sans", "Open Sans", sans-serif; color: #3b3b3b; overflow: hidden; }
button { border: 0; background: none; padding: 0; margin: 0; font: inherit; color: inherit; display: flex; align-items: center; }
input, select { font: inherit; border: 0; margin: 0; padding: 0; background: none; border-radius: 0; outline: 0; }
svg { display: block; flex: none; overflow: visible; }
i { font-style: normal; }
.tri { flex: none; width: 0; height: 0; border: 3px solid transparent; border-top-color: #666; border-bottom-width: 0; }
.tri.dark { border-top-color: #000; }
.tri.pale { border-top-color: #b5b5b5; }

.titlebar { height: 31px; flex: none; display: grid; grid-template-columns: 1fr auto 1fr; align-items: center; }
.titlebar h1 { margin: 0; font-size: 14px; font-weight: 400; color: #222; }
.quick { display: flex; align-items: center; height: 31px; padding: 0 0 5px 1px; }
.qsep { width: 1px; height: 18px; background: #999; margin-left: 4px; }
.quick button { margin-left: 9px; }
.quick .undo { margin-left: 11px; }
.quick .undo + .tri { margin-left: 9px; }
.quick .redo { margin-left: 8px; }
.quick .redo + .tri { margin-left: 9px; }
.quick .print { margin-left: 7px; }
.quick .print + .qsep { margin-left: 6px; }
.quick .more { margin-left: 6px; }
.winbtns { display: flex; justify-content: flex-end; gap: 46px; padding: 6px 25px 0 0; }

.tabs { height: 30px; flex: none; display: flex; border-bottom: 1px solid #b6b9bd; color: #444; }
.tabs .file { width: 70px; height: 30px; justify-content: center; color: #fff; border-radius: 3px 3px 0 0; background: linear-gradient(#2e8a33, #2b8a2f 50%, #48ab3c); border: 1px solid #1d6e2a; margin-right: 4px; }
.tab { height: 30px; padding: 0 14px; }
.tab.on { background: #fff; border: 1px solid #b6b9bd; border-bottom: 0; border-radius: 3px 3px 0 0; padding: 0 12px; }
.mdi { margin-left: auto; display: flex; align-items: center; gap: 10px; padding-right: 5px; }
.mdi button { width: 16px; justify-content: center; }

.ribbon { height: 106px; flex: none; display: flex; background: linear-gradient(#fff, #fff 45%, #e9ecef); border-bottom: 2px solid #8d9196; }
.group { flex: none; border-right: 1px solid #c9ccd1; display: flex; flex-direction: column; }
.group footer { height: 19px; margin-top: auto; display: flex; justify-content: center; position: relative; color: #6c727a; line-height: 20px; padding-right: 22px; }
.group footer.wide-foot { padding-right: 16px; }
.g-style footer, .g-cells footer, .g-edit footer { padding-right: 0; }
.launch { position: absolute; right: 5px; top: 6px; }
.body { display: flex; height: 85px; }
.body.stack, .stack { display: flex; flex-direction: column; }
.g-clip { width: 213px; } .g-font { width: 237px; } .g-align { width: 407px; } .g-num { width: 164px; }
.g-style { width: 278px; } .g-cells { width: 168px; } .g-edit { width: 263px; }
.big { flex-direction: column; align-items: center; justify-content: flex-start; padding-top: 10px; white-space: nowrap; line-height: 17px; }
.big svg { height: 31px; margin-bottom: 9px; }
.big span { display: flex; align-items: center; }
.big span .tri { margin-left: 6px; }
.big > .tri { margin-top: 5px; }
.g-clip .big { width: 62px; }
.list { display: flex; flex-direction: column; padding: 3px 0 0 3px; }
.list button { height: 27px; gap: 6px; white-space: nowrap; }
.list button .tri { margin-left: 2px; }
.line { display: flex; align-items: center; height: 27px; }
.stack { padding-top: 12px; gap: 9px; }
.g-font .stack, .g-num .stack { padding-left: 5px; }
.pick { height: 27px; border: 1px solid #d0d2d6; position: relative; background: #fff; }
.pick::after { content: ""; position: absolute; right: 4px; top: 12px; border: 3px solid transparent; border-top-color: #666; border-bottom-width: 0; }
.pick select { appearance: none; width: 100%; height: 25px; padding-left: 3px; color: #000; font-size: 12px; }
.name { width: 121px; } .size { width: 55px; margin-left: -1px; } .fmt { width: 155px; }
.grow { font: bold 17px/17px "Liberation Serif", serif; margin-left: 7px; align-items: flex-end; }
.grow i { border: 3px solid transparent; border-bottom: 3px solid #2e5aa8; border-top: 0; align-self: flex-start; margin-left: -1px; }
.grow.less { font-size: 14px; margin-left: 8px; }
.grow.less i { border-top: 3px solid #2e5aa8; border-bottom: 0; }
.bold { font: bold 15px/17px "Liberation Serif", serif; color: #111; width: 27px; justify-content: center; }
.ital { font-style: italic; }
.under { text-decoration: underline; }
.marks .tri { margin-left: 4px; }
.vsep { width: 1px; height: 16px; background: #cfd2d6; }
.marks .vsep { margin: 0 8px; }
.ink { flex-direction: column; margin-left: 7px; }
.ink b { font: bold 16px/13px "Liberation Serif", serif; color: #2b4f94; width: 20px; text-align: center; }
.ink u { width: 20px; height: 5px; background: #f00; }
.aligns { width: 152px; padding-left: 5px; }
.aligns button { width: 27px; height: 27px; justify-content: center; }
.aligns .pressed { border: 1px solid #c9962a; border-radius: 3px; background: linear-gradient(#fbcf63, #ffe27a); }
.aligns .vsep { margin: 0 5px 0 3px; }
.tall { width: 1px; height: 62px; margin-top: 12px; background: #d5d8dc; }
.wraps { padding-left: 9px; }
.wraps button { gap: 5px; white-space: nowrap; }
.wraps .tri { margin-left: 4px; }
.nums { padding-left: 6px; }
.nums .tri { margin-left: 7px; }
.pct { margin-left: 10px; font-size: 14px; }
.zeros { margin-left: 12px; font: 12px "Open Sans", sans-serif; font-size: 11px; }
.nums .vsep { margin: 0 8px 0 9px; }
.dec { flex-direction: column; align-items: flex-end; font-size: 9px; line-height: 12px; color: #111; width: 18px; margin-right: 8px; }
.dec span { display: flex; align-items: center; height: 9px; line-height: 9px; }
.wide { width: 126px; } .fmtas { width: 96px; } .cellst { width: 52px; }
.c1 { width: 64px; } .c2 { width: 45px; } .c3 { width: 60px; }
.edit { padding: 3px 0 0 12px; width: 112px; }
.edit button { height: 26px; gap: 5px; }
.edit button .tri { margin-left: 1px; }
.edit svg, .sigma { width: 14px; }
.sigma { font: bold 16px "Liberation Serif", serif; color: #000; }
.sort { width: 75px; } .find { width: 73px; }

.fbar { height: 33px; flex: none; display: flex; background: #e1e4e8; padding: 3px 0 4px 0; border-bottom: 1px solid #8d9196; }
.cellname { width: 184px; position: relative; background: #fff; border: 1px solid #9da1a6; border-right: 0; font-size: 15px; }
.cellname input { width: 158px; height: 24px; text-align: center; color: #111; }
.cellname::after { content: ""; position: absolute; right: 9px; top: 10px; border: 5px solid transparent; border-top: 5px solid #444; border-bottom: 0; }
.fx { width: 98px; display: flex; align-items: center; justify-content: space-between; border: 1px solid #9da1a6; border-right: 0; border-radius: 12px 0 0 12px; background: #dfe3e8; padding: 0 7px 0 6px; }
.fx i { width: 8px; height: 6px; border-radius: 4px 4px 0 0; background: #b5b9c0; }
.fx button { font: bold italic 18px/20px "Liberation Serif", serif; color: #333; }
.fx sub { font-size: 13px; vertical-align: baseline; align-self: flex-end; }
.formula { flex: 1; min-width: 0; background: #fff; border: 1px solid #9da1a6; }
.expand { width: 20px; justify-content: center; border: 1px solid #b4b8bd; border-left: 0; }

.sheet { flex: 1; min-height: 0; display: flex; }
.gridwrap { flex: 1; min-width: 0; overflow: hidden; position: relative; }
.grid { width: 100%; min-width: 1901px; table-layout: fixed; border-collapse: separate; border-spacing: 0; }
.rowcol { width: 37px; }
.grid thead tr { height: 26px; }
.grid th, .grid td { padding: 0; border: 0 solid #d6d7d9; border-width: 0 1px 1px 0; white-space: nowrap; }
.grid th { background: #dfe3e8; border-color: #a3a8b0; color: #3a3f46; font: 18px/22px "Noto Sans", "Open Sans", sans-serif; text-align: center; }
.grid tbody th div { height: 22px; }
.grid th.hot { background: linear-gradient(#ffd25a, #ffe46e); border-color: #c19a3d; }
.corner i { display: block; width: 0; height: 0; border: 8px solid transparent; border-right-color: #b9bdc3; border-bottom-color: #b9bdc3; margin: 2px 0 0 15px; }
.grid td { font-family: "Liberation Serif", serif; color: #000; position: relative; vertical-align: top; }
.grid td.edge { border-right: 2px solid #000; }
.grid td.top { border-bottom: 2px solid #000; }
.grid td.box { border: solid #000; border-width: 0 2px 2px 0; }
.grid td div { height: 28px; }
.grid td.title div { font-weight: 700; font-size: 22px; line-height: 28px; text-align: center; }
.grid td.first div { height: 23px; line-height: 24px; }
.lesson div { font-size: 24px; line-height: 33px; padding-left: 3px; }
.num div { font-size: 22px; line-height: 30px; text-align: center; }
.head div { font-size: 22px; line-height: 30px; font-weight: 700; text-align: center; }
.yellow { background: #ff0; }
.green { background: #92d050; }
.cursor { position: absolute; inset: -2px; border: 3px solid #000; }
.cursor::after { content: ""; position: absolute; right: -4px; bottom: -4px; width: 6px; height: 6px; background: #000; border: solid #fff; border-width: 1px 0 0 1px; }
.pagebreak { position: absolute; top: 26px; bottom: 0; width: 1px; background: repeating-linear-gradient(#000 0 9px, #fff 9px 11px); }
.pagebreak.left { left: 237px; }
.pagebreak.right { left: 1460px; }

.vscroll { width: 24px; flex: none; background: #dde1e6; border-left: 1px solid #aeb3b9; border-right: 4px solid #c2c6cb; display: flex; flex-direction: column; align-items: center; }
.split { width: 18px; height: 8px; margin: 1px 0 8px; background: #fff; border: 2px solid #8d9196; border-top-width: 1px; flex: none; }
.vtrack { flex: 1; width: 100%; margin: 6px 0 8px; }
.vthumb { height: 86%; border: 1px solid #8d9196; border-radius: 2px; background: linear-gradient(90deg, #f4f6f8, #dde1e6); display: flex; flex-direction: column; align-items: center; justify-content: center; gap: 1px; }
.vthumb i { width: 8px; height: 1px; background: #777; }
.vscroll .arr:last-child { margin-bottom: 7px; }

.sheetbar { height: 20px; flex: none; display: flex; background: #dde1e6; border-top: 1px solid #8d9196; font-size: 14px; line-height: 18px; color: #4a4e54; }
.snav { width: 79px; display: flex; align-items: center; gap: 10px; padding-left: 5px; border-right: 1px solid #8d9196; }
.stabs { display: flex; flex: 1; padding-left: 9px; }
.stabs > button { height: 19px; width: 45px; justify-content: center; }
.stabs > .cur { width: 62px; background: #fff; font-weight: 700; font-size: 16px; border-left: 1px solid #8d9196; color: #3b3b3b; margin-left: 7px; }
.stabs > .newsheet { width: 26px; }
.hscroll { width: 782px; display: flex; align-items: center; gap: 7px; padding-right: 24px; }
.hsplit { width: 9px; height: 18px; background: #fff; border: 2px solid #8d9196; border-width: 1px 2px; flex: none; }
.htrack { flex: 1; height: 19px; display: flex; justify-content: flex-end; }
.hthumb { width: 65%; border: 1px solid #8d9196; border-radius: 2px; background: linear-gradient(#f2f4f6, #dfe3e8); display: flex; align-items: center; justify-content: center; gap: 1px; }
.hthumb i { width: 1px; height: 7px; background: #777; }

.status { height: 27px; flex: none; display: flex; align-items: center; border-top: 2px solid #8d9196; background: linear-gradient(#e9ebee, #b9bcc2); font-size: 12px; }
.ready { width: 60px; padding-left: 8px; border-right: 1px solid #8d9196; line-height: 22px; }
.views { margin-left: auto; height: 24px; border-left: 1px solid #8d9196; padding-left: 5px; display: flex; align-items: center; gap: 1px; }
.views button { width: 23px; height: 24px; justify-content: center; }
.views .sel { border: 2px solid #d9a83c; border-radius: 3px; background: #ffe681; }
.pc { width: 49px; text-align: center; }
.zoomer { display: flex; align-items: center; padding-right: 4px; }
.zoomer button { width: 20px; height: 20px; border: 1px solid #777b80; border-radius: 50%; background: #eef0f2; justify-content: center; }
.zoomer input { width: 125px; height: 20px; appearance: none; background: linear-gradient(#8b8f95, #8b8f95) center / 100% 1px no-repeat; }
.zoomer input::-webkit-slider-thumb { appearance: none; width: 11px; height: 16px; background: #f2f3f5; border: 2px solid #777b80; border-radius: 1px 1px 5px 5px; }

.taskbar { height: 50px; flex: none; display: flex; justify-content: space-between; color: #fff; background: linear-gradient(90deg, #18242e 0, #1a1e26 45%, #1c1d24 54%, #404148 59%, #3d3c49 62%, #1b214b 65%, #1b2140 69%, #1a2529 72%, #1c211a 77%, #1d1e1e 80%); }
.apps { display: flex; }
.apps button { width: 62px; height: 50px; justify-content: center; position: relative; }
.apps button:first-child { width: 60px; }
.apps .run::after { content: ""; position: absolute; left: 6px; right: 5px; bottom: 0; height: 3px; background: #a9d6f3; }
.apps .front::before { content: ""; position: absolute; left: 4px; right: -3px; top: 0; bottom: 0; background: #454a52; border-right: 4px solid #30353d; }
.apps .front::after { left: 4px; right: 1px; }
.apps .front svg { position: relative; }
.apps .two::after { border-right: 10px solid #7d9cb3; right: 3px; }
.tray { display: flex; align-items: center; gap: 10px; }
.lang { font-size: 14px; width: 28px; margin-left: 3px; }
.tray time { display: flex; flex-direction: column; align-items: center; width: 76px; font-size: 14px; line-height: 23px; margin-left: 1px; }
.tray button { margin-left: 10px; }
.peek { width: 6px; height: 50px; border-left: 1px solid #666; margin-left: 14px; }
</style>
